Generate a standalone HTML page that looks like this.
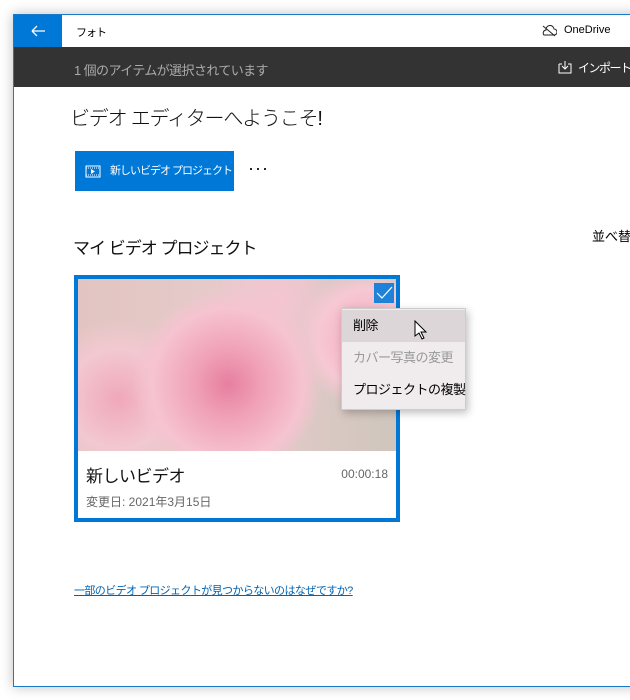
<!DOCTYPE html>
<html><head><meta charset="utf-8"><style>
*{margin:0;padding:0;box-sizing:border-box}
body{width:630px;height:700px;background:#fff;position:relative;overflow:hidden;font-family:"Liberation Sans","Noto Sans CJK JP",sans-serif}
div{white-space:nowrap}
.win{position:absolute;left:13px;top:14px;width:640px;height:673px;border:1px solid #1979ca;background:#fff;box-shadow:0 0 12px rgba(0,0,0,.25)}
.back{position:absolute;left:0;top:0;width:48px;height:32px;background:#0078d7}
.title{position:absolute;left:62px;top:9px;font-size:11px;color:#000;letter-spacing:-1px}
.od{position:absolute;left:550px;top:9px;font-size:11px;color:#000}
.bar{position:absolute;left:0;top:32px;width:100%;height:40px;background:#333}
.bar .t{position:absolute;left:60px;top:13px;font-size:13px;color:#aaa;letter-spacing:-.6px}
.bar .imp{position:absolute;left:564px;top:12px;font-size:12px;color:#fff;letter-spacing:-1.5px}
.h1{position:absolute;left:70px;top:102px;font-size:20px;color:#111;font-weight:300;letter-spacing:-1.2px}
.btn{position:absolute;left:75px;top:151px;width:159px;height:40px;background:#0078d7;color:#fff;font-size:11px;line-height:40px;padding-left:35px;letter-spacing:-1px;overflow:hidden}
.dots{position:absolute;left:248px;top:158px;font-size:18px;letter-spacing:1px}
.h2{position:absolute;left:73px;top:234px;font-size:17px;color:#111;letter-spacing:-1px}
.sort{position:absolute;left:592px;top:226px;font-size:13px}
.card{position:absolute;left:74px;top:275px;width:326px;height:247px;border:4px solid #0078d7;background:#fff}
.img{position:absolute;left:0;top:0;width:318px;height:172px;overflow:hidden;background:
radial-gradient(circle at 150px 105px,#e77fa0 0,#f0a2b8 35px,#f6c3d0 75px,transparent 95px),
radial-gradient(circle at 290px 60px,#f3a8bd 0,#f7c8d4 50px,transparent 70px),
radial-gradient(circle at 40px 120px,#f0a8b9 0,#f2c8d1 50px,transparent 80px),
radial-gradient(circle at 200px 20px,#f5c5d2 0,transparent 70px),
linear-gradient(90deg,#e2c5c2,#e6cbcb 50%,#cfc6bd)}
.chk{position:absolute;left:296px;top:4px;width:20px;height:20px;background:#1e82d8}
.name{position:absolute;left:8px;top:183px;font-size:17px;color:#111;letter-spacing:-.5px}
.dur{position:absolute;right:8px;top:188px;font-size:12px;color:#666}
.date{position:absolute;left:8px;top:214px;font-size:12px;color:#666}
.menu{position:absolute;left:341px;top:308px;width:125px;height:102px;background:#f0ebec;border:1px solid #ccc;box-shadow:2px 3px 8px rgba(0,0,0,.25);font-size:13px;letter-spacing:-.5px}
.menu div{height:32px;line-height:32px;padding-left:11px}
.link{position:absolute;left:74px;top:582px;font-size:11px;color:#0063b1;text-decoration:underline;letter-spacing:-.6px}
</style></head><body>
<div class="win">
<div class="back"><svg width="48" height="32"><path d="M18 16h13M18 16l5-5M18 16l5 5" stroke="#fff" stroke-width="1.3" fill="none"/></svg></div>
<div class="title">フォト</div>
<svg style="position:absolute;left:527px;top:10px" width="16" height="12"><path d="M3 10h10a3 3 0 0 0 0-6 4 4 0 0 0-8 1 3 3 0 0 0-2 5z" fill="none" stroke="#222"/><path d="M2 1l12 10" stroke="#222"/></svg>
<div class="od">OneDrive</div>
<div class="bar"><div class="t">1 個のアイテムが選択されています</div>
<svg style="position:absolute;left:544px;top:13px" width="14" height="14"><path d="M1 4h3M10 4h3v9H1V4M7 1v8M4 6l3 3 3-3" fill="none" stroke="#fff"/></svg>
<div class="imp">インポート</div></div>
</div>
<div class="h1">ビデオ エディターへようこそ!</div>
<div class="btn"><svg style="position:absolute;left:10px;top:13px" width="16" height="14"><rect x="1" y="2" width="14" height="11" fill="none" stroke="#fff"/><path d="M6 5v5l4-2.5z" fill="#fff"/><path d="M1 4h14M1 11h14" stroke="#fff" stroke-dasharray="1 1"/></svg>新しいビデオ プロジェクト</div>
<div class="dots">···</div>
<div class="h2">マイ ビデオ プロジェクト</div>
<div class="sort">並べ替</div>
<div class="card"><div class="img"><div class="chk"><svg width="20" height="20"><path d="M3 10l5 5 10-11" stroke="#fff" stroke-width="1.2" fill="none"/></svg></div></div>
<div class="name">新しいビデオ</div><div class="dur">00:00:18</div><div class="date">変更日: 2021年3月15日</div></div>
<div class="menu"><div style="background:#dcd6d8;margin-top:1px">削除</div><div style="color:#999">カバー写真の変更</div><div>プロジェクトの複製</div></div>
<svg style="position:absolute;left:414px;top:320px" width="14" height="20"><path d="M1 1v15l4-3 3 6 2-1-3-6h5z" fill="#fff" stroke="#000"/></svg>
<div class="link">一部のビデオ プロジェクトが見つからないのはなぜですか?</div>
</body></html>
